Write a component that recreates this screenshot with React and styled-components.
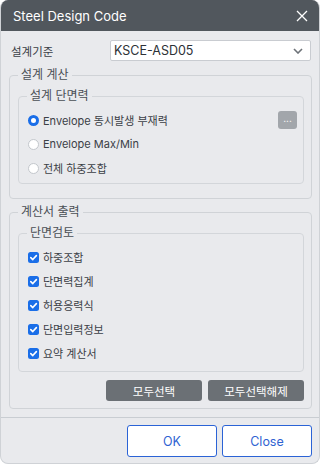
import React, { useState } from "react";
import styled, { createGlobalStyle } from "styled-components";

const GlobalStyle = createGlobalStyle`
  html, body {
    margin: 0;
    padding: 0;
    background: #ffffff;
  }
  body {
    font-family: "Inter", "Noto Sans CJK KR", "Noto Sans", sans-serif;
    font-size: 12px;
    color: #3b4046;
  }
`;

const Dialog = styled.div`
  width: 320px;
  height: 464px;
  box-sizing: border-box;
  border: 1px solid #cfd2d6;
  border-top: none;
  border-radius: 8px;
  overflow: hidden;
  background: #e9eaed;
  display: flex;
  flex-direction: column;
`;

const TitleBar = styled.div`
  height: 31px;
  flex: none;
  background: #51575d;
  color: #ffffff;
  display: flex;
  align-items: center;
  justify-content: space-between;
  padding: 0 10px 0 12px;
  font-size: 13px;
`;

const CloseIcon = styled.button`
  border: none;
  background: none;
  padding: 0;
  width: 14px;
  height: 14px;
  display: flex;
  align-items: center;
  justify-content: center;
  cursor: pointer;
`;

const Body = styled.div`
  flex: 1;
  padding: 9px 7px 0 7px;
  display: flex;
  flex-direction: column;
`;

const CodeRow = styled.div`
  display: flex;
  align-items: center;
  height: 21px;
  margin-bottom: 6px;
`;

const CodeLabel = styled.span`
  width: 99px;
  padding-left: 3px;
  font-size: 11.5px;
`;

const Select = styled.div`
  flex: 1;
  height: 21px;
  box-sizing: border-box;
  margin-right: 1px;
  background: #ffffff;
  border: 1px solid #c9ccd1;
  border-radius: 2px;
  display: flex;
  align-items: center;
  justify-content: space-between;
  padding: 0 7px 0 3px;
  font-size: 12.5px;
  color: #2d3136;
`;

const Group = styled.fieldset`
  margin: 0 0 ${(p) => p.$gap || 0}px ${(p) => p.$inset || 0}px;
  padding: ${(p) => p.$pad};
  border: 1px solid ${(p) => (p.$inner ? "#d3d6da" : "#d0d3d7")};
  border-radius: 4px;
  min-width: 0;
`;

const Legend = styled.legend`
  padding: 0 3px;
  line-height: 16px;
  font-size: 12px;
  color: #4a4f55;
`;

const OptionRow = styled.label`
  display: flex;
  align-items: center;
  height: 24px;
  padding-left: 1px;
  font-size: 11px;
  color: #3b4046;
  cursor: pointer;
`;

const Radio = styled.span`
  width: 11px;
  height: 11px;
  box-sizing: border-box;
  border-radius: 50%;
  margin-right: 4px;
  flex: none;
  background: #ffffff;
  border: ${(p) => (p.$on ? "3.5px solid #1a6ee8" : "1px solid #c3c7cc")};
`;

const Check = styled.span`
  width: 11px;
  height: 11px;
  border-radius: 2.5px;
  margin-right: 4px;
  flex: none;
  background: #1a6ee8;
  display: flex;
  align-items: center;
  justify-content: center;
`;

const OptionText = styled.span`
  flex: 1;
`;

const MoreButton = styled.button`
  width: 19px;
  height: 18px;
  margin-right: 0;
  border: none;
  border-radius: 3px;
  background: #a2a6ab;
  color: #ffffff;
  font-size: 10px;
  line-height: 10px;
  padding: 0 0 4px;
  font-family: inherit;
`;

const ActionRow = styled.div`
  display: flex;
  justify-content: flex-end;
  gap: 6px;
  margin-top: 8px;
`;

const GrayButton = styled.button`
  width: 96px;
  height: 21px;
  border: none;
  border-radius: 3px;
  background: #6b7075;
  color: #ffffff;
  font-family: inherit;
  font-size: 11.5px;
  padding: 0;
`;

const Divider = styled.div`
  height: 1px;
  background: #c9cdd2;
  margin: 8px -7px 0;
`;

const Footer = styled.div`
  display: flex;
  justify-content: flex-end;
  gap: 5px;
  padding: 7px 0 0;
`;

const DialogButton = styled.button`
  width: 90px;
  height: 32px;
  box-sizing: border-box;
  background: #ffffff;
  border: 1px solid #2b63d6;
  border-radius: 3px;
  color: #2f63d2;
  font-family: inherit;
  font-size: 12.5px;
  padding: 0;
`;

const CheckMark = () => (
  <svg width="9" height="9" viewBox="0 0 10 10">
    <path d="M2 5.2 L4.2 7.3 L8.2 2.9" fill="none" stroke="#fff" strokeWidth="1.8" strokeLinecap="round" strokeLinejoin="round" />
  </svg>
);

const reports = ["하중조합", "단면력집계", "허용응력식", "단면입력정보", "요약 계산서"];
const forceOptions = ["Envelope 동시발생 부재력", "Envelope Max/Min", "전체 하중조합"];

export default function App() {
  const [force, setForce] = useState(0);

  return (
    <>
      <GlobalStyle />
      <Dialog>
        <TitleBar>
          <span>Steel Design Code</span>
          <CloseIcon>
            <svg width="12" height="12" viewBox="0 0 12 12">
              <path d="M1 1 L11 11 M11 1 L1 11" stroke="#fff" strokeWidth="1.3" />
            </svg>
          </CloseIcon>
        </TitleBar>
        <Body>
          <CodeRow>
            <CodeLabel>설계기준</CodeLabel>
            <Select>
              <span>KSCE-ASD05</span>
              <svg width="10" height="6" viewBox="0 0 10 6">
                <path d="M1 1 L5 5 L9 1" fill="none" stroke="#6d7278" strokeWidth="1.6" />
              </svg>
            </Select>
          </CodeRow>

          <Group $pad="5px 7px 14px 8px" $gap={5} $inset={1}>
            <Legend>설계 계산</Legend>
            <Group $inner $pad="4px 6px 3px 8px">
              <Legend>설계 단면력</Legend>
              {forceOptions.map((o, i) => (
                <OptionRow key={o} onClick={() => setForce(i)}>
                  <Radio $on={force === i} />
                  <OptionText>{o}</OptionText>
                  {i === 0 && <MoreButton>...</MoreButton>}
                </OptionRow>
              ))}
            </Group>
          </Group>

          <Group $pad="5px 7px 7px 8px" $inset={1}>
            <Legend>계산서 출력</Legend>
            <Group $inner $pad="4px 6px 6px 8px">
              <Legend>단면검토</Legend>
              {reports.map((r) => (
                <OptionRow key={r}>
                  <Check>
                    <CheckMark />
                  </Check>
                  <OptionText>{r}</OptionText>
                </OptionRow>
              ))}
            </Group>
            <ActionRow>
              <GrayButton>모두선택</GrayButton>
              <GrayButton>모두선택해제</GrayButton>
            </ActionRow>
          </Group>

          <Divider />
          <Footer>
            <DialogButton>OK</DialogButton>
            <DialogButton>Close</DialogButton>
          </Footer>
        </Body>
      </Dialog>
    </>
  );
}
